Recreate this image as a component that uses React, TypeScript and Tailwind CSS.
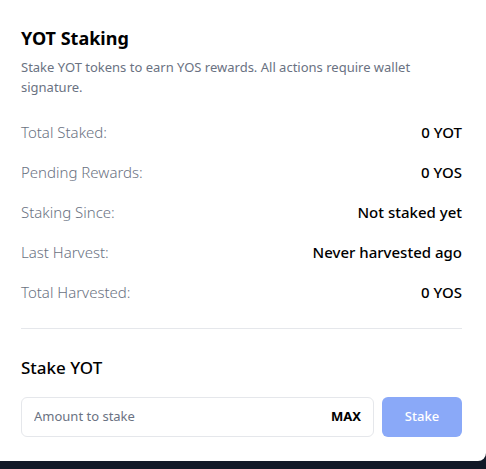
import React, { useState } from 'react';

const rows: { label: string; value: string }[] = [
  { label: 'Total Staked:', value: '0 YOT' },
  { label: 'Pending Rewards:', value: '0 YOS' },
  { label: 'Staking Since:', value: 'Not staked yet' },
  { label: 'Last Harvest:', value: 'Never harvested ago' },
  { label: 'Total Harvested:', value: '0 YOS' },
];

export default function App() {
  const [amount, setAmount] = useState('');

  return (
    <div className="min-h-screen bg-[#111827] font-['Noto_Sans',sans-serif]">
      {/* Staking card */}
      <div className="bg-white w-full rounded-br-lg pl-[21px] pr-6 pt-6 pb-6 h-[461px]">
        <h2 className="text-[18px] leading-7 font-bold text-black">YOT Staking</h2>
        <p className="mt-[5px] text-[13px] leading-5 text-gray-500 pr-10">
          Stake YOT tokens to earn YOS rewards. All actions require wallet signature.
        </p>

        {/* Stats */}
        <div className="mt-[15px]">
          {rows.map((r) => (
            <div key={r.label} className="h-10 flex items-center justify-between text-[15px]">
              <span className="font-light text-gray-500">{r.label}</span>
              <span className="font-medium text-black">{r.value}</span>
            </div>
          ))}
        </div>

        <div className="mt-4 h-px bg-gray-200"></div>

        {/* Stake form */}
        <h3 className="mt-[27px] text-[17px] leading-6 font-medium text-black">Stake YOT</h3>
        <div className="mt-[17px] flex gap-2">
          <div className="flex-1 h-10 flex items-center border border-gray-200 rounded-md pl-3 pr-3">
            <input
              className="flex-1 min-w-0 outline-none text-[13px] text-gray-700 placeholder:text-gray-500"
              placeholder="Amount to stake"
              value={amount}
              onChange={(e) => setAmount(e.target.value)}
            />
            <button className="text-[13px] font-bold text-black">MAX</button>
          </div>
          <button
            className="w-20 h-10 rounded-md bg-[#8aa9f8] text-white text-[13px] font-medium cursor-not-allowed"
            disabled={!amount}
          >
            Stake
          </button>
        </div>
      </div>
    </div>
  );
}
